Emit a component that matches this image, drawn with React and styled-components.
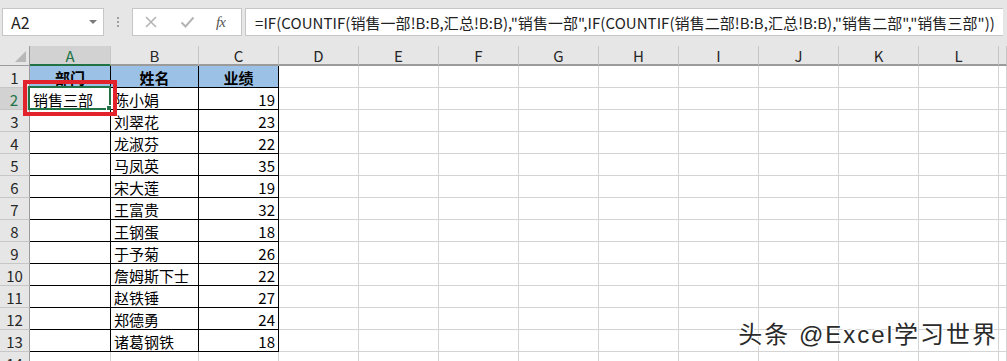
import React from 'react'
import styled, { createGlobalStyle } from 'styled-components'

const GlobalStyle = createGlobalStyle`
  html, body {
    margin: 0;
    padding: 0;
    background: #ffffff;
  }
  body {
    font-family: "Noto Sans CJK SC", "Liberation Sans", sans-serif;
  }
`

const Frame = styled.div`
  position: relative;
  width: 1007px;
  height: 361px;
  overflow: hidden;
  background: #e6e6e6;
`

const FormulaBar = styled.div`
  display: flex;
  align-items: center;
  height: 46px;
  padding: 0 4px 2px 2px;
  box-sizing: border-box;
`

const NameBox = styled.div`
  display: flex;
  align-items: center;
  justify-content: space-between;
  width: 102px;
  height: 28px;
  box-sizing: border-box;
  border: 1px solid #c6c6c6;
  background: #fff;
  padding: 0 6px 0 8px;
  font-size: 16px;
  color: #222;
`

const Caret = styled.span`
  width: 0;
  height: 0;
  border-left: 4px solid transparent;
  border-right: 4px solid transparent;
  border-top: 4px solid #7a7a7a;
`

const Grip = styled.div`
  display: flex;
  flex-direction: column;
  gap: 2px;
  margin: 0 13px 0 13px;
  span {
    width: 2px;
    height: 2px;
    background: #a0a0a0;
  }
`

const FxBox = styled.div`
  display: flex;
  align-items: center;
  flex: 0 0 110px;
  height: 28px;
  box-sizing: border-box;
  border: 1px solid #c6c6c6;
  background: #fff;
  padding: 0 0 0 11px;
  overflow: hidden;
`

const FxSlot = styled.div`
  flex: 0 0 36px;
  display: flex;
  align-items: center;
  justify-content: flex-start;
`

const FxLabel = styled.span`
  font-family: "Liberation Serif", serif;
  font-style: italic;
  font-size: 15px;
  color: #555;
  letter-spacing: -1px;
`

const FormulaInput = styled.div`
  flex: 1;
  height: 28px;
  margin-left: 3px;
  box-sizing: border-box;
  border: 1px solid #c6c6c6;
  border-right: none;
  background: #fff;
  padding: 0 0 0 9px;
  display: flex;
  align-items: center;
  font-size: 15px;
  letter-spacing: 0.06px;
  color: #222;
  white-space: nowrap;
  overflow: hidden;
`

const Sheet = styled.div`
  position: relative;
  display: grid;
  grid-template-columns: 30px 81px 88px 80px repeat(9, 80px) 1fr;
  grid-auto-rows: 22px;
  grid-template-rows: 20px;
  background: #fff;
  font-size: 15px;
`

const Corner = styled.div`
  position: relative;
  background: #e6e6e6;
  border-right: 1px solid #9b9b9b;
  border-bottom: 1px solid #9b9b9b;
  box-sizing: border-box;
  &::after {
    content: '';
    position: absolute;
    right: 3px;
    bottom: 3px;
    width: 0;
    height: 0;
    border-left: 11px solid transparent;
    border-bottom: 11px solid #b8b8b8;
  }
`

const ColHead = styled.div`
  display: flex;
  align-items: center;
  justify-content: center;
  box-sizing: border-box;
  background: ${p => (p.$active ? '#d2d2d2' : '#e6e6e6')};
  color: ${p => (p.$active ? '#217346' : '#262626')};
  border-right: 1px solid #c6c6c6;
  border-bottom: ${p => (p.$active ? '2px solid #217346' : '2px solid #9b9b9b')};
  font-size: 15px;
  line-height: 1;
  padding-top: 1px;
`

const RowHead = styled.div`
  display: flex;
  align-items: center;
  justify-content: center;
  box-sizing: border-box;
  background: ${p => (p.$active ? '#d2d2d2' : '#e6e6e6')};
  color: ${p => (p.$active ? '#217346' : '#262626')};
  border-right: ${p => (p.$active ? '2px solid #217346' : '1px solid #9b9b9b')};
  border-bottom: 1px solid #c6c6c6;
  font-size: 15px;
  padding-top: 1px;
`

const Cell = styled.div`
  position: relative;
  display: flex;
  align-items: center;
  justify-content: ${p => (p.$align === 'right' ? 'flex-end' : p.$align === 'center' ? 'center' : 'flex-start')};
  box-sizing: border-box;
  padding: 1px 3px 0 3px;
  background: ${p => (p.$fill ? '#9bc2e6' : '#fff')};
  border-right: 1px solid ${p => (p.$boxed ? '#000' : '#d4d4d4')};
  border-bottom: 1px solid ${p => (p.$boxed ? '#000' : '#d4d4d4')};
  font-weight: ${p => (p.$bold ? 700 : 400)};
  color: #000;
  white-space: nowrap;
  overflow: visible;
`

const Selection = styled.div`
  position: absolute;
  left: -2px;
  top: -2px;
  right: -1px;
  bottom: -1px;
  border: 2px solid #217346;
  pointer-events: none;
  &::after {
    content: '';
    position: absolute;
    right: -4px;
    bottom: -4px;
    width: 5px;
    height: 5px;
    background: #217346;
    border: 1px solid #fff;
  }
`

const Annotation = styled.div`
  position: absolute;
  left: 23px;
  top: 34px;
  width: 94px;
  height: 36px;
  box-sizing: border-box;
  border: 4px solid #e3232c;
  pointer-events: none;
`

const Watermark = styled.div`
  position: absolute;
  right: 9px;
  bottom: 13px;
  font-family: "Liberation Sans", "Noto Sans CJK SC", sans-serif;
  font-size: 24px;
  line-height: 1.1;
  color: #2a2a2a;
  letter-spacing: 2px;
  text-shadow: 1px 1px 0 #fff, -1px -1px 0 #fff, 1px -1px 0 #fff, -1px 1px 0 #fff;
`

const columns = ['A', 'B', 'C', 'D', 'E', 'F', 'G', 'H', 'I', 'J', 'K', 'L', 'M']

const data = [
  ['部门', '姓名', '业绩'],
  ['销售三部', '陈小娟', 19],
  ['', '刘翠花', 23],
  ['', '龙淑芬', 22],
  ['', '马凤英', 35],
  ['', '宋大莲', 19],
  ['', '王富贵', 32],
  ['', '王钢蛋', 18],
  ['', '于予菊', 26],
  ['', '詹姆斯下士', 22],
  ['', '赵铁锤', 27],
  ['', '郑德勇', 24],
  ['', '诸葛钢铁', 18],
  ['', '', ''],
]

const formula =
  '=IF(COUNTIF(销售一部!B:B,汇总!B:B),"销售一部",IF(COUNTIF(销售二部!B:B,汇总!B:B),"销售二部","销售三部"))'

function CrossIcon() {
  return (
    <svg width="14" height="14" viewBox="0 0 14 14">
      <path d="M2 2 L12 12 M12 2 L2 12" stroke="#b4b4b4" strokeWidth="1.6" fill="none" />
    </svg>
  )
}

function CheckIcon() {
  return (
    <svg width="15" height="14" viewBox="0 0 15 14">
      <path d="M1.5 7.5 L5.5 11.5 L13.5 2.5" stroke="#b4b4b4" strokeWidth="2" fill="none" />
    </svg>
  )
}

export default function App() {
  return (
    <Frame>
      <GlobalStyle />
      <FormulaBar>
        <NameBox>
          A2
          <Caret />
        </NameBox>
        <Grip>
          <span />
          <span />
          <span />
        </Grip>
        <FxBox>
          <FxSlot>
            <CrossIcon />
          </FxSlot>
          <FxSlot>
            <CheckIcon />
          </FxSlot>
          <FxSlot>
            <FxLabel>fx</FxLabel>
          </FxSlot>
        </FxBox>
        <FormulaInput>{formula}</FormulaInput>
      </FormulaBar>
      <Sheet>
        <Corner />
        {columns.map(c => (
          <ColHead key={c} $active={c === 'A'}>
            {c === 'M' ? '' : c}
          </ColHead>
        ))}
        {data.map((row, r) => (
          <React.Fragment key={r}>
            <RowHead $active={r === 1}>{r + 1}</RowHead>
            {columns.map((c, ci) => {
              const inTable = ci < 3 && r < 13
              const value = ci < 3 ? row[ci] : ''
              let align = 'left'
              if (r === 0 && inTable) align = 'center'
              else if (ci === 2) align = 'right'
              return (
                <Cell
                  key={c}
                  $boxed={inTable}
                  $fill={r === 0 && inTable}
                  $bold={r === 0}
                  $align={align}
                >
                  {value}
                  {r === 1 && ci === 0 && <Selection />}
                </Cell>
              )
            })}
          </React.Fragment>
        ))}
        <Annotation />
      </Sheet>
      <Watermark>头条 @Excel学习世界</Watermark>
    </Frame>
  )
}
